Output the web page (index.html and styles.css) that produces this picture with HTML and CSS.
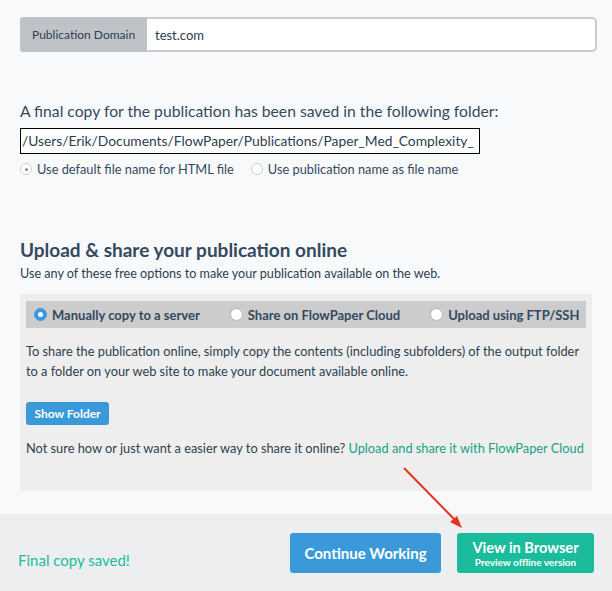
FILE: index.html
```html
<!DOCTYPE html>
<html lang="en">

<head>
    <meta charset="UTF-8">
    <meta name="viewport" content="width=device-width, initial-scale=1.0">
    <title>Publish</title>
    <link rel="stylesheet" href="styles.css">
</head>

<body>
    <div id="mainWrapper">
        <div class="inputGroup">
            <div class="inputLabel">Publication Domain</div>
            <div class="inputField">test.com</div>
        </div>

        <h3 class="folderTitle">A final copy for the publication has been saved in the following folder:</h3>
        <div class="pathBox">/Users/Erik/Documents/FlowPaper/Publications/Paper_Med_Complexity_</div>
        <div class="nameOptions">
            <label class="smallRadio"><span class="smallDot checked"></span>Use default file name for HTML file</label>
            <label class="smallRadio"><span class="smallDot"></span>Use publication name as file name</label>
        </div>

        <h2 class="shareTitle">Upload &amp; share your publication online</h2>
        <p class="shareSub">Use any of these free options to make your publication available on the web.</p>

        <div id="sharePanel">
            <div class="tabBar">
                <label class="tab"><span class="tabDot checked"></span>Manually copy to a server</label>
                <label class="tab"><span class="tabDot"></span>Share on FlowPaper Cloud</label>
                <label class="tab"><span class="tabDot"></span>Upload using FTP/SSH</label>
            </div>
            <p class="panelText">To share the publication online, simply copy the contents (including subfolders) of the output folder to a folder on your web site to make your document available online.</p>
            <button type="button" id="showFolderBtn">Show Folder</button>
            <p class="panelText nowrap">Not sure how or just want a easier way to share it online? <a href="#" class="cloudLink">Upload and share it with FlowPaper Cloud</a></p>
        </div>
    </div>

    <div id="footer">
        <div class="savedMsg">Final copy saved!</div>
        <div class="footerBtns">
            <button type="button" id="continueBtn">Continue Working</button>
            <button type="button" id="viewBtn">View in Browser<span>Preview offline version</span></button>
        </div>
    </div>

    <svg class="arrow" width="612" height="591" viewBox="0 0 612 591">
        <line x1="404" y1="468" x2="456" y2="521" stroke="#e5321f" stroke-width="2" />
        <polygon points="462,528 450,522 457,516" fill="#e5321f" />
    </svg>
</body>

</html>
```

FILE: styles.css
```css
*,
*::after,
*::before {
    box-sizing: border-box;
}

body {
    margin: 0;
    background-color: #f8f9fb;
    font-family: Lato, 'Open Sans', sans-serif;
    color: #34495e;
    position: relative;
    height: 591px;
    overflow: hidden;
}

#mainWrapper {
    padding: 17px 20px 0px 20px;
    height: 514px;
}

.inputGroup {
    display: flex;
    width: 577px;
    height: 35px;
}

.inputLabel {
    background-color: #bfc3c7;
    color: #2c3e50;
    font-size: 12px;
    padding: 0px 12px;
    width: 127px;
    display: flex;
    align-items: center;
    white-space: nowrap;
    border-radius: 3px 0px 0px 3px;
}

.inputField {
    flex: 1;
    background-color: #fff;
    border: 2px solid #c8ccd0;
    border-left: none;
    border-radius: 0px 5px 5px 0px;
    font-size: 13px;
    color: #2c3e50;
    padding-left: 8px;
    display: flex;
    align-items: center;
}

.folderTitle {
    font-size: 15.7px;
    font-weight: normal;
    margin: 48px 0px 6px 0px;
    line-height: 22px;
}

.pathBox {
    width: 460px;
    height: 26px;
    border: 1px solid #000;
    background-color: #fff;
    font-size: 13.8px;
    line-height: 24px;
    padding-left: 1px;
    white-space: nowrap;
    overflow: hidden;
    color: #2c3e50;
}

.nameOptions {
    display: flex;
    margin-top: 7px;
    font-size: 12.8px;
    height: 16px;
    align-items: center;
}

.smallRadio {
    display: flex;
    align-items: center;
    margin-right: 17px;
}

.smallDot {
    width: 12px;
    height: 12px;
    border: 1px solid #ccd0d3;
    border-radius: 50%;
    background-color: #fff;
    margin-right: 5px;
    display: flex;
    align-items: center;
    justify-content: center;
}

.smallDot.checked::after {
    content: "";
    width: 3px;
    height: 3px;
    border-radius: 50%;
    background-color: #888;
}

.shareTitle {
    font-size: 19px;
    font-weight: bold;
    margin: 61px 0px 0px 0px;
    line-height: 24px;
}

.shareSub {
    font-size: 12.6px;
    margin: 4px 0px 0px 0px;
    line-height: 16px;
    color: #2c3e50;
}

#sharePanel {
    margin-top: 12px;
    width: 572px;
    height: 197px;
    background-color: #eeeeee;
    padding: 7px 6px;
}

.tabBar {
    background-color: #cccccc;
    height: 27px;
    display: flex;
    align-items: center;
    padding-left: 8px;
    font-size: 13px;
    font-weight: bold;
    white-space: nowrap;
}

.tab {
    display: flex;
    align-items: center;
    margin-right: 30px;
}

.tabDot {
    width: 13px;
    height: 13px;
    border-radius: 50%;
    background-color: #fff;
    border: 1px solid #b5b5b5;
    margin-right: 5px;
    display: flex;
    align-items: center;
    justify-content: center;
}

.tabDot.checked {
    background-color: #3a97e6;
    border-color: #3a97e6;
}

.tabDot.checked::after {
    content: "";
    width: 5px;
    height: 5px;
    border-radius: 50%;
    background-color: #fff;
}

.panelText {
    font-size: 12.8px;
    line-height: 20px;
    margin: 13px 0px 0px 0px;
    color: #2c3e50;
}

.nowrap {
    white-space: nowrap;
}

.cloudLink {
    color: #16a085;
    text-decoration: none;
}

#showFolderBtn {
    display: block;
    margin: 21px 0px 12px 0px;
    background-color: #3a9ad9;
    color: #fff;
    border: none;
    border-radius: 3px;
    font-family: Lato, sans-serif;
    font-size: 12px;
    font-weight: bold;
    width: 83px;
    height: 23px;
    padding: 0px;
}

#footer {
    height: 77px;
    background-color: #edeef0;
    display: flex;
    justify-content: space-between;
    padding: 19px 18px 0px 18px;
}

.savedMsg {
    color: #1abc9c;
    font-size: 15px;
    margin-top: 18px;
}

.footerBtns {
    display: flex;
    gap: 16px;
    align-items: flex-start;
}

.footerBtns button {
    border: none;
    border-radius: 3px;
    color: #fff;
    font-family: Lato, sans-serif;
    font-weight: bold;
    height: 40px;
    padding: 0px;
}

#continueBtn {
    background-color: #3a9ad9;
    width: 151px;
    font-size: 15px;
}

#viewBtn {
    background-color: #1abc9c;
    width: 137px;
    font-size: 14.6px;
    display: flex;
    flex-direction: column;
    align-items: center;
    justify-content: center;
    line-height: 17px;
}

#viewBtn span {
    font-size: 10px;
    line-height: 11px;
    margin-top: 1px;
}

.arrow {
    position: absolute;
    left: 0px;
    top: 0px;
    pointer-events: none;
}
```
